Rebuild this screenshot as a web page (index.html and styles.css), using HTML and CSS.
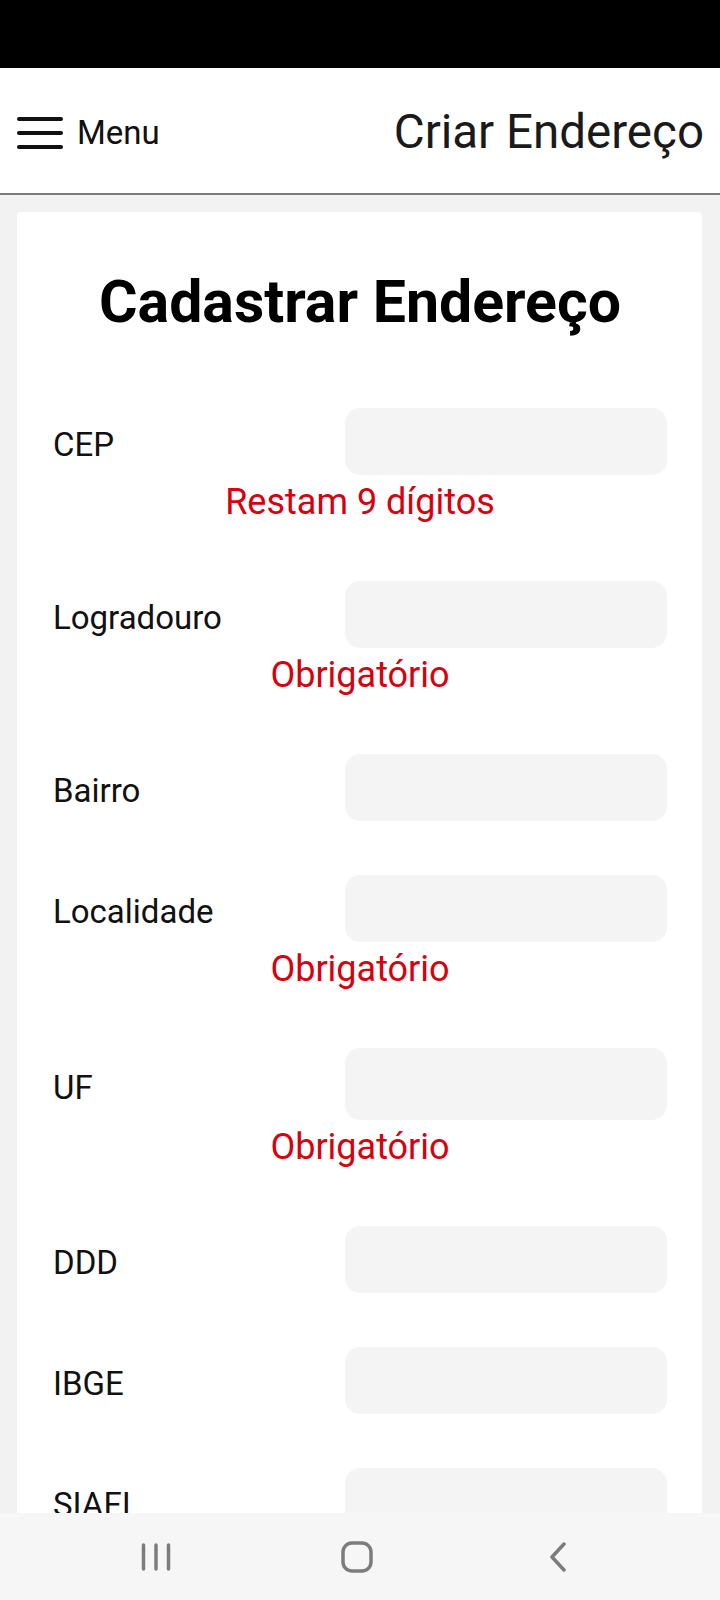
FILE: index.html
```html
<!DOCTYPE html>
<html lang="pt-BR">
<head>
<meta charset="utf-8">
<title>Criar Endereço</title>
<link rel="stylesheet" href="styles.css">
</head>
<body>
<div class="statusbar"></div>
<header class="appbar">
  <div class="menu">
    <svg class="burger" width="46" height="34" viewBox="0 0 46 34"><g stroke="#111" stroke-width="4" stroke-linecap="round"><line x1="2" y1="3" x2="44" y2="3"/><line x1="2" y1="17" x2="44" y2="17"/><line x1="2" y1="31" x2="44" y2="31"/></g></svg>
    <span class="menu-text">Menu</span>
  </div>
  <div class="appbar-title">Criar Endereço</div>
</header>
<main class="content">
  <section class="card">
    <h1 class="card-title">Cadastrar Endereço</h1>
    <div class="field"><label class="label">CEP</label><div class="input"></div></div>
    <div class="error">Restam 9 dígitos</div>
    <div class="field"><label class="label">Logradouro</label><div class="input"></div></div>
    <div class="error">Obrigatório</div>
    <div class="field"><label class="label">Bairro</label><div class="input"></div></div>
    <div class="field"><label class="label">Localidade</label><div class="input"></div></div>
    <div class="error">Obrigatório</div>
    <div class="field"><label class="label">UF</label><div class="input input-tall"></div></div>
    <div class="error">Obrigatório</div>
    <div class="field"><label class="label">DDD</label><div class="input"></div></div>
    <div class="field"><label class="label">IBGE</label><div class="input"></div></div>
    <div class="field"><label class="label">SIAFI</label><div class="input"></div></div>
  </section>
</main>
<nav class="navbar">
  <span class="nav-btn"><svg width="30" height="28" viewBox="0 0 30 28"><g stroke="#7c7c7c" stroke-width="3.5" stroke-linecap="round"><line x1="2.5" y1="2" x2="2.5" y2="26"/><line x1="15" y1="2" x2="15" y2="26"/><line x1="27.5" y1="2" x2="27.5" y2="26"/></g></svg></span>
  <span class="nav-btn"><svg width="32" height="32" viewBox="0 0 32 32"><rect x="2" y="2" width="28" height="28" rx="9" fill="none" stroke="#7c7c7c" stroke-width="3.5"/></svg></span>
  <span class="nav-btn"><svg width="20" height="30" viewBox="0 0 20 30"><polyline points="16,2 4,15 16,28" fill="none" stroke="#7c7c7c" stroke-width="3.5" stroke-linecap="round" stroke-linejoin="round"/></svg></span>
</nav>
</body>
</html>
```
FILE: styles.css
```css
html, body {
  margin: 0;
  padding: 0;
}
body {
  width: 720px;
  height: 1600px;
  overflow: hidden;
  background: #f2f2f2;
  font-family: Roboto, "Liberation Sans", sans-serif;
  color: #111;
}
.statusbar {
  height: 68px;
  background: #000;
}
.appbar {
  height: 125px;
  background: #fff;
  border-bottom: 2px solid #7a7a7a;
  display: flex;
  align-items: center;
  justify-content: space-between;
  padding: 0 16px 0 17px;
}
.menu {
  display: flex;
  align-items: center;
  gap: 14px;
  padding-top: 4px;
}
.burger {
  display: block;
}
.menu-text {
  font-size: 33px;
  color: #111;
}
.appbar-title {
  font-size: 47.5px;
  color: #1a1a1a;
  padding-top: 2px;
}
.content {
  padding: 17px 18px 0 17px;
}
.card {
  background: #fff;
  border-radius: 4px;
  padding: 0 35px 60px 36px;
}
.card-title {
  margin: 0;
  padding: 58px 0 74px;
  line-height: 64px;
  font-size: 59px;
  font-weight: 700;
  text-align: center;
  color: #000;
}
.field {
  display: grid;
  grid-template-columns: 1fr 322px;
  align-items: center;
  margin-bottom: 54px;
}
.field:has(+ .error) {
  margin-bottom: 0;
}
.label {
  font-size: 33px;
  color: #111;
  padding-top: 6px;
}
.input {
  height: 67px;
  border-radius: 15px;
  background: #f4f4f4;
}
.input-tall {
  height: 72px;
}
.error {
  text-align: center;
  color: #d7000f;
  font-size: 36px;
  line-height: 43px;
  padding: 6px 0 2px;
  margin-bottom: 55px;
}
.navbar {
  position: fixed;
  left: 0;
  right: 0;
  bottom: 0;
  height: 87px;
  background: #f6f6f6;
  display: flex;
  align-items: center;
  justify-content: center;
  gap: 141px;
  padding-right: 6px;
}
.nav-btn {
  width: 60px;
  display: flex;
  justify-content: center;
}
```
